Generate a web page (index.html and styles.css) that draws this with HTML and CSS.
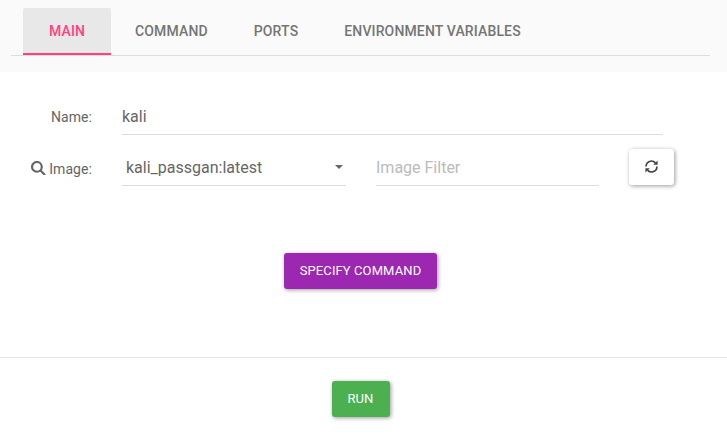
FILE: index.html
```html
<!DOCTYPE html>
<html lang="en">
<head>
<meta charset="utf-8">
<title>Run container</title>
<link rel="stylesheet" href="styles.css">
</head>
<body>
<header class="header">
  <nav class="tabs">
    <a class="tab active">MAIN</a>
    <a class="tab">COMMAND</a>
    <a class="tab">PORTS</a>
    <a class="tab">ENVIRONMENT VARIABLES</a>
  </nav>
</header>
<main class="form">
  <div class="row name-row">
    <label class="label">Name:</label>
    <div class="field name">kali</div>
  </div>
  <div class="row image-row">
    <label class="label"><svg class="search" viewBox="0 0 14 14"><circle cx="5.7" cy="5.7" r="4.7"/><path d="M9.2 9.2L13 13"/></svg> Image:</label>
    <div class="field select">kali_passgan:latest<svg class="caret" viewBox="0 0 8 4"><path d="M0 0h8L4 4z"/></svg></div>
    <div class="field filter">Image Filter</div>
    <button class="btn refresh" aria-label="Refresh"><svg viewBox="0 0 13 13"><path class="arc" d="M1.1 6.5A5.3 5.3 0 0 1 10.4 2.9M11.9 6.5A5.3 5.3 0 0 1 2.6 10.1"/><path d="M12.6 .4V4.8H8.2zM.4 12.6V8.2H4.8z"/></svg></button>
  </div>
  <button class="btn command">SPECIFY COMMAND</button>
</main>
<footer class="footer"><button class="btn run">RUN</button></footer>
</body>
</html>
```
FILE: styles.css
```css
* { box-sizing: border-box; }
body { margin: 0; height: 435px; overflow: hidden; background: #fff; color: #666; font: 16px/24px Roboto, sans-serif; }
.header { height: 72px; padding: 8px 17px 0 11px; background: #fafafa; }
.tabs { display: flex; height: 48px; padding-left: 12px; border-bottom: 1px solid #dcdcdc; }
.tab { height: 47px; padding: 0 23px; line-height: 46px; font-size: 14px; font-weight: 500; letter-spacing: .14px; color: #757575; white-space: nowrap; }
.tab.active { width: 88px; margin-right: 1px; padding: 0 26px; border-radius: 2px 2px 0 0; background: #e8e8e8; color: #ff4081; border-bottom: 2px solid #ff4081; }
.form { height: 285px; padding-top: 27px; display: flex; flex-direction: column; }
.row { display: flex; }
.name-row { height: 50px; }
.label { width: 92px; margin-right: 30px; text-align: right; font-size: 14px; line-height: 37px; letter-spacing: .08px; white-space: nowrap; }
.image-row { height: 37px; }
.image-row .label { line-height: 40px; }
.field { height: 36px; line-height: 35px; border-bottom: 1px solid #dcdcdc; }
.image-row .field { height: 37px; line-height: 37px; }
.name { width: 541px; }
.select { width: 224px; padding: 0 3px 0 4px; margin-right: 30px; display: flex; align-items: center; justify-content: space-between; }
.filter { width: 223px; color: #bbb; margin-right: 30px; }
.caret { width: 8px; height: 4px; fill: #666; }
.search { width: 14.5px; height: 14.5px; vertical-align: -1px; fill: none; stroke: #666; stroke-width: 2.1; stroke-linecap: round; }
.btn { height: 36px; padding: 0; border: 0; border-radius: 3px; font: 13px/36px Roboto, sans-serif; letter-spacing: .1px; color: #fff; box-shadow: 1px 1px 4px rgba(0,0,0,.4); }
.refresh { width: 45px; background: #fff; display: flex; align-items: center; justify-content: center; }
.refresh svg { width: 13px; height: 13px; fill: #444; margin-top: -1px; }
.arc { fill: none; stroke: #444; stroke-width: 1.7; }
.command { width: 153px; margin: 67px 0 0 284px; background: #9c27b0; }
.footer { height: 78px; border-top: 1px solid #e8e8e8; padding: 23px 0 0 332px; }
.run { width: 58px; background: #4caf50; display: block; padding-right: 1px; }
```
